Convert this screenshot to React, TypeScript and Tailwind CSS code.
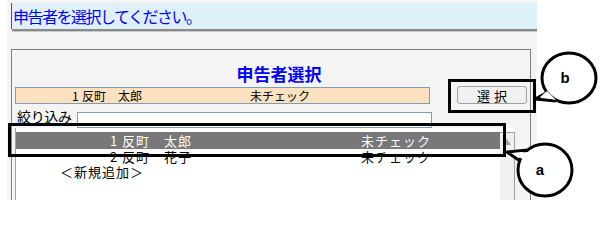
import React from "react";

const jp = { fontFamily: '"Noto Sans CJK JP", "Noto Sans", sans-serif' };

type Row = { no: string; name: string; status: string };

const rows: Row[] = [
  { no: "1", name: "反町　太郎", status: "未チェック" },
  { no: "2", name: "反町　花子", status: "未チェック" },
];

function ListRow({ row, selected }: { row: Row; selected?: boolean }) {
  return (
    <div
      className={`flex items-center pl-[94px] text-[13px] tracking-[1px] ${
        selected ? "h-[17px] bg-[#787878] text-white" : "h-[15px] text-black"
      }`}
    >
      <span className="w-[12px]">{row.no}</span>
      <span className="w-[239px]">{row.name}</span>
      <span>{row.status}</span>
    </div>
  );
}

function Annotations() {
  return (
    <svg
      className="absolute left-0 top-0 pointer-events-none"
      width={603}
      height={221}
      viewBox="0 0 603 221"
    >
      {/* box around button */}
      <rect x={449.5} y={80.5} width={85} height={31} fill="none" stroke="#000" strokeWidth={3} />
      {/* box around selected row */}
      <rect x={9.5} y={124.5} width={495} height={31} fill="none" stroke="#000" strokeWidth={3} />

      {/* callout b */}
      <path
        d="M548 92 L535 99 L556 101"
        fill="#fff"
        stroke="#000"
        strokeWidth={3}
        strokeLinejoin="round"
      />
      <ellipse cx={569} cy={78} rx={27} ry={25} fill="#fff" stroke="#000" strokeWidth={3} />
      <path d="M547 91 L540 97 L556 100 Z" fill="#fff" />
      <text x={565} y={83} fontSize={15} fontWeight={700} textAnchor="middle" fontFamily="Liberation Sans, Arial, sans-serif">
        b
      </text>

      {/* callout a */}
      <path
        d="M528 150 L507 152 L523 163"
        fill="#fff"
        stroke="#000"
        strokeWidth={3}
        strokeLinejoin="round"
      />
      <ellipse cx={545} cy={170} rx={27} ry={26} fill="#fff" stroke="#000" strokeWidth={3} />
      <path d="M529 152 L512 153 L524 160 Z" fill="#fff" />
      <text x={540} y={175} fontSize={15} fontWeight={700} textAnchor="middle" fontFamily="Liberation Sans, Arial, sans-serif">
        a
      </text>
    </svg>
  );
}

export default function App() {
  return (
    <div className="relative w-[603px] h-[221px] bg-white overflow-hidden" style={jp}>
      <div className="ml-[7px] w-[530px] h-[200px] bg-[#f4f4f4] pt-[3px] overflow-hidden">
        {/* header */}
        <div className="ml-[4px] h-[26px] border-l-[1.5px] border-[#2e6b4e] bg-[#e0f0f8] flex items-center pl-[1px]">
          <span className="text-[16px] leading-none tracking-[-1.5px] text-[#0000ff]">申告者を選択してください。</span>
        </div>
        <div className="ml-[5px] h-[3px] border-t-2 border-[#8a8a8a] border-b border-b-[#c8c8c8]" />

        {/* panel */}
        <div className="ml-[4px] mt-[17px] w-[520px] h-[160px] border border-b-0 border-[#808080] flex flex-col">
          <div className="pt-[14px] pl-[16px] h-[36px] text-center text-[17px] leading-[20px] font-bold text-[#0000ff]">
            申告者選択
          </div>

          <div className="flex items-center h-[18px]">
            <div className="ml-[3px] w-[415px] h-[17px] mt-[1px] bg-[#fee1c0] border border-[#7f9db9] flex items-center pl-[56px] text-[12px] text-black">
              <span className="w-[10px]">1</span>
              <span className="w-[168px]">反町　太郎</span>
              <span>未チェック</span>
            </div>
            <button
              type="button"
              className="ml-[27px] w-[70px] h-[18px] bg-[#f0f0f0] border border-[#a0a0a0] rounded-[3px] text-[13px] leading-none tracking-[4px] pl-[4px] text-black"
            >
              選択
            </button>
          </div>

          <div className="flex items-end h-[24px]">
            <span className="ml-[5px] w-[60px] text-[14px] leading-[20px] tracking-[-0.3px] self-center text-black">絞り込み</span>
            <div className="w-[355px] h-[16px] bg-white border border-[#7f9db9]" />
          </div>

          <div className="ml-[3px] w-[500px] flex-1 bg-white border-l border-[#a0a0a0] flex">
            <div className="flex-1 pt-[4px]">
              <ListRow row={rows[0]} selected />
              <ListRow row={rows[1]} />
              <div className="h-[16px] flex items-center pl-[44px] text-[13px] tracking-[1px] text-black">
                ＜新規追加＞
              </div>
            </div>
            <div className="mt-[4px] w-[15px] bg-[#f0f0f0] border-t border-r border-[#a0a0a0] flex justify-center pt-[6px]">
              <div className="w-0 h-0 border-l-[4px] border-r-[4px] border-b-[6px] border-l-transparent border-r-transparent border-b-[#a0a0a0]" />
            </div>
          </div>
        </div>
      </div>
      <Annotations />
    </div>
  );
}
